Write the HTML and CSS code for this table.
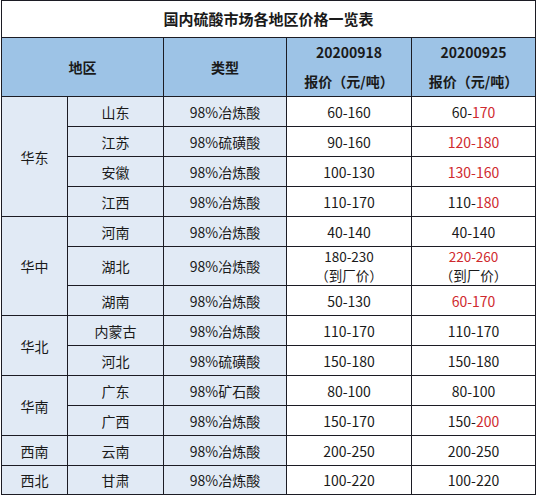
FILE: index.html
```html
<!DOCTYPE html>
<html lang="zh-CN">
<head>
<meta charset="utf-8">
<title>国内硫酸市场各地区价格一览表</title>
<link rel="stylesheet" href="styles.css">
</head>
<body>
<div class="wrap">
<table class="price">
  <colgroup>
    <col class="c1"><col class="c2"><col class="c3"><col class="c4"><col class="c5">
  </colgroup>
  <tr class="title-row"><td colspan="5" class="title">国内硫酸市场各地区价格一览表</td></tr>
  <tr class="head-row">
    <th colspan="2">地区</th>
    <th>类型</th>
    <th>20200918<br>报价（元/吨）</th>
    <th>20200925<br>报价（元/吨）</th>
  </tr>
  <tr><td rowspan="4" class="blue">华东</td><td class="blue">山东</td><td class="blue">98%冶炼酸</td><td>60-160</td><td>60-<span class="red">170</span></td></tr>
  <tr><td class="blue">江苏</td><td class="blue">98%硫磺酸</td><td>90-160</td><td class="red">120-180</td></tr>
  <tr><td class="blue">安徽</td><td class="blue">98%冶炼酸</td><td>100-130</td><td class="red">130-160</td></tr>
  <tr><td class="blue">江西</td><td class="blue">98%冶炼酸</td><td>110-170</td><td>110-<span class="red">180</span></td></tr>
  <tr><td rowspan="3" class="blue">华中</td><td class="blue">河南</td><td class="blue">98%冶炼酸</td><td>40-140</td><td>40-140</td></tr>
  <tr class="tall"><td class="blue">湖北</td><td class="blue">98%冶炼酸</td><td class="two">180-230<br>（到厂价）</td><td class="two"><span class="red">220-260</span><br>（到厂价）</td></tr>
  <tr><td class="blue">湖南</td><td class="blue">98%冶炼酸</td><td>50-130</td><td class="red">60-170</td></tr>
  <tr><td rowspan="2" class="blue">华北</td><td class="blue">内蒙古</td><td class="blue">98%冶炼酸</td><td>110-170</td><td>110-170</td></tr>
  <tr><td class="blue">河北</td><td class="blue">98%硫磺酸</td><td>150-180</td><td>150-180</td></tr>
  <tr><td rowspan="2" class="blue">华南</td><td class="blue">广东</td><td class="blue">98%矿石酸</td><td>80-100</td><td>80-100</td></tr>
  <tr><td class="blue">广西</td><td class="blue">98%冶炼酸</td><td>150-170</td><td>150-<span class="red">200</span></td></tr>
  <tr><td class="blue">西南</td><td class="blue">云南</td><td class="blue">98%冶炼酸</td><td>200-250</td><td>200-250</td></tr>
  <tr class="last"><td class="blue">西北</td><td class="blue">甘肃</td><td class="blue">98%冶炼酸</td><td>100-220</td><td>100-220</td></tr>
</table>
</div>
</body>
</html>
```
FILE: styles.css
```css
html, body {
  margin: 0;
  padding: 0;
  background: #ffffff;
}
.wrap {
  padding: 0 0 0 1px;
}
.price {
  border-collapse: collapse;
  table-layout: fixed;
  width: 534px;
  font-family: "Noto Sans CJK SC", "Noto Sans", sans-serif;
  font-size: 14px;
  color: #1a1a1a;
}
.c1 { width: 66px; }
.c2 { width: 96px; }
.c3 { width: 123px; }
.c4 { width: 125px; }
.c5 { width: 124px; }
.price td, .price th {
  border: 1px solid #1c1c24;
  text-align: center;
  vertical-align: middle;
  padding: 0;
  height: 29px;
  line-height: 18px;
  background: #ffffff;
}
.price .title {
  height: 36px;
  font-weight: bold;
  font-size: 15px;
}
.price th {
  height: 58px;
  background: #9dc3e6;
  font-weight: bold;
  line-height: 29px;
}
.price td.blue {
  background: #e1eaf5;
}
.price .tall td {
  height: 38px;
}
.price td.two {
  line-height: 19px;
  font-size: 13.5px;
}
.price .last td {
  height: 28px;
}
.red {
  color: #cf2a2e;
}
```
